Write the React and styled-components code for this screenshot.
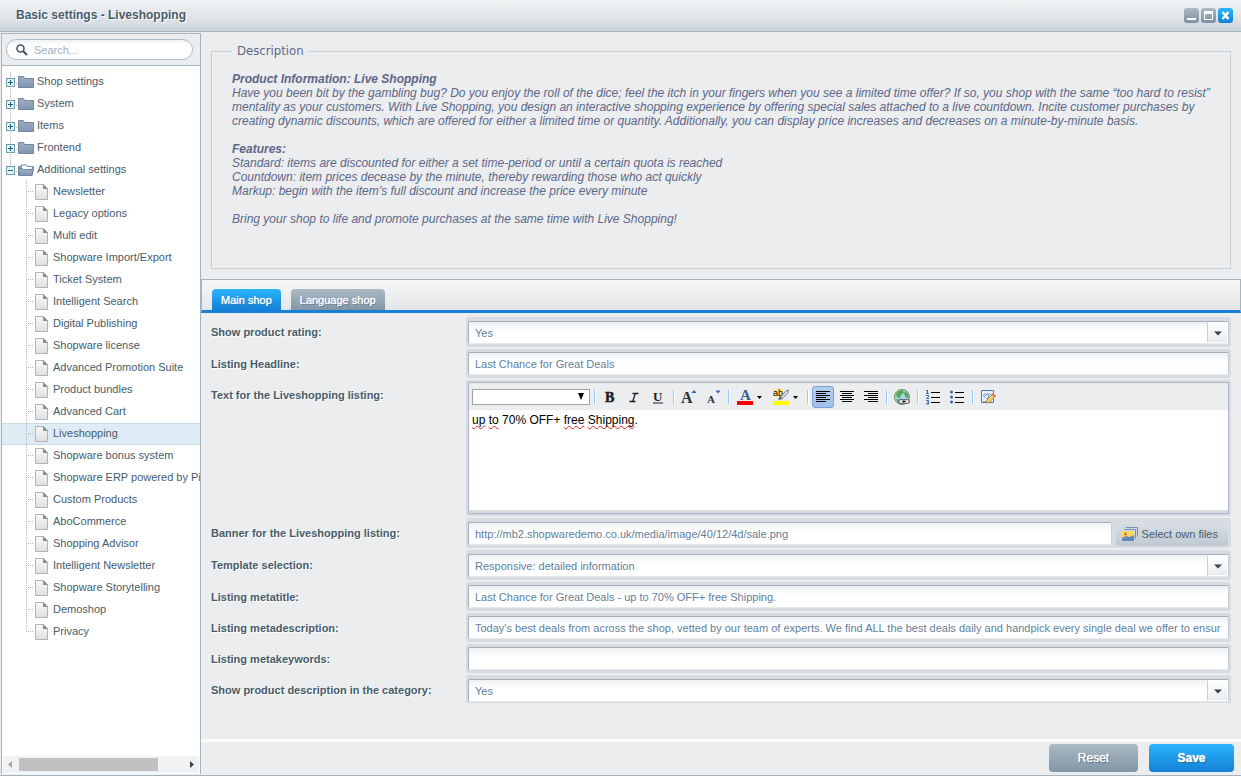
import React from 'react';
import styled, { createGlobalStyle, css } from 'styled-components';

const c = {
  bg: '#ebedef',
  line: '#a4b5c0',
  field: '#d6dce2',
  fieldLine: '#a3afb9',
  text: '#475c6a',
  input: '#62809b',
  blueTop: '#2ab4fc',
  blueBottom: '#1480d7',
  greyTop: '#abbac4',
  greyBottom: '#8296a6',
};

const Global = createGlobalStyle`
  * { box-sizing: border-box; }
  body {
    margin: 0;
    background: ${c.bg};
    color: ${c.text};
    font: 11px/14px "Liberation Sans", Arial, sans-serif;
  }
  button, input, select { font: inherit; color: inherit; }
`;

const Window = styled.div`
  display: flex;
  flex-direction: column;
  min-height: 100vh;
  padding-bottom: 1px;
  border-bottom: 1px solid ${c.line};
`;

const TitleBar = styled.header`
  display: flex;
  align-items: center;
  height: 32px;
  padding: 0 8px 1px 16px;
  background: linear-gradient(#f0f2f3, #e3e7ea 50%, #cbd3da);
  border-bottom: 1px solid ${c.line};
`;

const Title = styled.h1`
  flex: 1;
  margin: 0;
  font-size: 12px;
  line-height: 14px;
  text-shadow: 1px 1px 0 #fff;
`;

const Controls = styled.div`
  display: flex;
  gap: 2px;
`;

const ControlButton = styled.button`
  display: flex;
  width: 15px;
  height: 15px;
  padding: 0;
  border: 0;
  border-radius: 3px;
  background: ${(p) =>
    p.$primary
      ? `linear-gradient(${c.blueTop}, ${c.blueBottom})`
      : `linear-gradient(${c.greyTop}, #7c909f)`};
`;

const Body = styled.div`
  display: flex;
  flex: 1;
`;

const Sidebar = styled.aside`
  display: flex;
  flex-direction: column;
  flex: none;
  width: 200px;
  margin: 1px 0 0 1px;
  border: 1px solid ${c.line};
  border-bottom: 0;
  background: #fff;
`;

const SearchBar = styled.div`
  padding: 5px 7px 5px 4px;
  background: ${c.bg};
  border-bottom: 1px solid ${c.line};
`;

const SearchBox = styled.label`
  display: flex;
  align-items: center;
  gap: 6px;
  height: 21px;
  padding: 0 9px;
  border: 1px solid #abbecb;
  border-radius: 11px;
  background: linear-gradient(#eff1f3, #fff 5px);
`;

const SearchInput = styled.input`
  flex: 1;
  min-width: 0;
  padding: 0;
  border: 0;
  outline: 0;
  background: transparent;
  &::placeholder { color: #9db2bf; opacity: 1; }
`;

const Tree = styled.ul`
  flex: 1;
  margin: 0;
  padding: 5px 0 0;
  list-style: none;
  overflow: hidden;
`;

const TreeRow = styled.li`
  display: flex;
  align-items: center;
  height: 22px;
  padding-left: ${(p) => (p.$leaf ? 24 : 4)}px;
  border: solid transparent;
  border-width: 1px 0;
  white-space: nowrap;
  ${(p) =>
    p.$selected &&
    css`
      background: #deedf5;
      border-color: #c9dbe6;
    `}
`;

const TreeIcon = styled.svg`
  flex: none;
  margin: -1px 0;
`;

const TreeLabel = styled.a`
  padding-bottom: 2px;
  color: inherit;
  text-decoration: none;
`;

const ScrollTrack = styled.div`
  display: flex;
  align-items: center;
  height: 17px;
  margin: 0 1px 1px;
  background: #f1f2f3;
`;

const ScrollArrow = styled.svg`
  flex: none;
`;

const ScrollThumb = styled.div`
  width: 139px;
  height: 13px;
  margin-right: auto;
  background: #c1c1c1;
`;

const Main = styled.main`
  display: flex;
  flex-direction: column;
  flex: 1;
  min-width: 0;
`;

const Description = styled.fieldset`
  margin: 11px 10px 10px;
  padding: 13px 8px 42px 20px;
  border: 1px solid #c9ced3;
  color: #5d6788;
  font-size: 12px;
  font-style: italic;
  line-height: 14px;
`;

const Legend = styled.legend`
  padding: 0 5px;
  font: 13px/16px "DejaVu Sans Condensed", "DejaVu Sans", sans-serif;
  color: #5d6788;
`;

const Paragraph = styled.p`
  margin: 0 0 14px;
  &:last-child { margin: 0; }
`;

const TabBar = styled.div`
  display: flex;
  align-items: flex-end;
  gap: 10px;
  height: 34px;
  padding: 0 10px;
  border: 1px solid ${c.line};
  border-bottom: 3px solid ${c.blueBottom};
  background: linear-gradient(#f6f7f8, #e4e6e9);
`;

const Tab = styled.button`
  height: 21px;
  padding: 0 9px;
  border: 0;
  border-radius: 4px 4px 0 0;
  color: #fff;
  text-shadow: 0 0 1px #fff, 1px 1px 0 rgba(40, 70, 110, 0.5);
  background: ${(p) =>
    p.$active
      ? `linear-gradient(${c.blueTop}, ${c.blueBottom})`
      : `linear-gradient(${c.greyTop}, ${c.greyBottom})`};
`;

const Form = styled.form`
  display: grid;
  grid-template-columns: 255px minmax(0, 1fr);
  row-gap: 2px;
  align-items: start;
  padding: 4px 10px 0;
`;

const Label = styled.label`
  padding-top: 2px;
  font-weight: bold;
  line-height: 27px;
  text-shadow: 1px 1px 0 #fff;
`;

const Field = styled.div`
  display: flex;
  position: relative;
  padding: ${(p) => (p.$tall ? 4 : 3)}px 2px 3px;
  border-radius: 3px;
  background: ${c.field};
  ${(p) =>
    p.$clipped &&
    css`
      padding-bottom: 1px;
      border-radius: 3px 3px 0 0;
    `}
`;

const control = css`
  flex: 1;
  min-width: 0;
  height: 23px;
  padding: 0 6px;
  border: 1px solid ${c.fieldLine};
  border-right-color: #c6ced5;
  border-bottom-color: #e6eaed;
  border-radius: 2px;
  outline: 0;
  color: ${c.input};
  background: linear-gradient(#eff1f3, #fff 9px);
`;

const TextInput = styled.input`
  ${control}
`;

const Select = styled.select`
  ${control}
  appearance: none;
`;

const Trigger = styled.span`
  position: absolute;
  right: 3px;
  bottom: ${(p) => (p.$clipped ? 2 : 4)}px;
  display: flex;
  align-items: center;
  justify-content: center;
  width: 21px;
  height: 21px;
  padding-top: 2px;
  border: 1px solid #fff;
  border-left-color: #c6ced5;
  background: linear-gradient(#fff, #e9ecee);
  pointer-events: none;
`;

const FileButton = styled.button`
  display: flex;
  align-items: center;
  gap: 4px;
  height: 24px;
  margin: 0 1px -1px 4px;
  padding: 0 10px 0 6px;
  border: 0;
  border-radius: 3px;
  background: linear-gradient(#d9dfe5, #bdc9d2);
`;

const EditorField = styled.div`
  padding: 2px;
  border-radius: 3px;
  background: ${c.field};
`;

const Editor = styled.div`
  padding-bottom: 3px;
  border: 1px solid #b0b5cc;
  background: ${c.field};
`;

const Toolbar = styled.div`
  display: flex;
  align-items: center;
  height: 27px;
  padding-left: 3px;
  background: ${c.bg};
`;

const FontSelect = styled.span`
  display: flex;
  position: relative;
  align-items: center;
  margin-right: 1px;
`;

const FontDropdown = styled.select`
  appearance: none;
  width: 118px;
  height: 16px;
  padding: 0;
  border: 1px solid #a2a2a2;
  border-radius: 0;
  background: #fff;
`;

const FontArrow = styled.svg`
  position: absolute;
  right: 6px;
  pointer-events: none;
`;

const Separator = styled.span`
  width: 2px;
  height: 14px;
  margin: 0 2px 0 3px;
  border-left: 1px solid #98c8ff;
  background: #fff;
`;

const ToolButton = styled.button`
  display: flex;
  align-items: center;
  justify-content: center;
  width: ${(p) => (p.$wide ? 34 : 22)}px;
  height: 22px;
  margin: 0 1px;
  padding: 0;
  border: 1px solid transparent;
  border-radius: 3px;
  background: transparent;
  ${(p) =>
    p.$pressed &&
    css`
      border-color: #7e9fd0;
      background: linear-gradient(#b3cdef, #9dbfea);
    `}
`;

const Glyph = styled.svg`
  flex: none;
  overflow: visible;
  font-family: "Liberation Serif", serif;
  font-weight: bold;
`;

const EditorText = styled.div`
  height: 100px;
  padding: 3px;
  background: #fff;
  color: #000;
  font-size: 12px;
  outline: 0;
`;

const Misspelled = styled.span`
  text-decoration: underline wavy #e02020 1px;
  text-underline-offset: 1px;
  text-decoration-skip-ink: none;
`;

const Footer = styled.footer`
  display: flex;
  justify-content: flex-end;
  gap: 11px;
  margin-top: auto;
  padding: 2px 7px;
  border-top: 3px solid #f9fafa;
`;

const ActionButton = styled.button`
  min-width: ${(p) => (p.$primary ? 85 : 89)}px;
  height: 28px;
  border: 0;
  border-radius: 4px;
  color: #fff;
  font-size: 12px;
  font-weight: ${(p) => (p.$primary ? 'bold' : 'normal')};
  text-shadow: 0 0 1px #fff, 1px 1px 1px rgba(40, 60, 90, 0.6);
  background: ${(p) =>
    p.$primary
      ? `linear-gradient(${c.blueTop}, ${c.blueBottom})`
      : `linear-gradient(${c.greyTop}, ${c.greyBottom})`};
`;

const folders = [
  { name: 'Shop settings' },
  { name: 'System' },
  { name: 'Items' },
  { name: 'Frontend' },
  { name: 'Additional settings', open: true },
];

const pages = [
  'Newsletter', 'Legacy options', 'Multi edit', 'Shopware Import/Export', 'Ticket System',
  'Intelligent Search', 'Digital Publishing', 'Shopware license', 'Advanced Promotion Suite',
  'Product bundles', 'Advanced Cart', 'Liveshopping', 'Shopware bonus system',
  'Shopware ERP powered by Pickware', 'Custom Products', 'AboCommerce', 'Shopping Advisor',
  'Intelligent Newsletter', 'Shopware Storytelling', 'Demoshop', 'Privacy',
];

function FolderRow({ name, open }) {
  return (
    <TreeRow>
      <TreeIcon width="31" height="22" viewBox="0 0 31 22" aria-hidden="true">
        <defs>
          <linearGradient id="folder" x1="0" y1="0" x2="0" y2="1">
            <stop offset="0" stopColor="#9fb0c4" />
            <stop offset="1" stopColor="#7f95b0" />
          </linearGradient>
        </defs>
        <path d={open ? 'M4.5 1v6' : 'M4.5 1v21'} stroke="#b5b5b5" strokeDasharray="1 1" />
        <path d="M10 12.5h2" stroke="#b5b5b5" strokeDasharray="1 1" />
        <rect x="0.5" y="7.5" width="8" height="8" fill="#dff3f7" stroke="#6f9aa6" />
        <path d="M2 11.5h5" stroke="#1f6478" />
        {!open && <path d="M4.5 9v5" stroke="#1f6478" />}
        {open ? (
          <>
            <path d="M15.500 8.500v-2.500h5l1 1.500h5v2" fill="#fff" stroke="#7389a3" />
            <path d="M12.500 16.500v-9h2.500v3h10.500l2-3-1.500 9z" fill="url(#folder)" stroke="#7188a2" />
            <path d="M13.500 16.500l-1-7h4l1 1h10l-1.500 6z" fill="url(#folder)" stroke="#7188a2" />
          </>
        ) : (
          <path d="M12.500 16.500v-11h5l1 2h9v9z" fill="url(#folder)" stroke="#7188a2" />
        )}
      </TreeIcon>
      <TreeLabel href="#">{name}</TreeLabel>
    </TreeRow>
  );
}

function PageRow({ name, selected, last }) {
  return (
    <TreeRow $leaf $selected={selected}>
      <TreeIcon width="27" height="22" viewBox="0 0 27 22" aria-hidden="true">
        <defs>
          <linearGradient id="page" x1="0" y1="0" x2="0" y2="1">
            <stop offset="0" stopColor="#fafafa" />
            <stop offset="1" stopColor="#dedfe0" />
          </linearGradient>
        </defs>
        <path d={last ? 'M0.5 0v11' : 'M0.5 0v22'} stroke="#b5b5b5" strokeDasharray="1 1" />
        <path d="M2 10.500h6" stroke="#b5b5b5" strokeDasharray="1 1" />
        <path d="M9.500 3.500h8l4 4v11h-12z" fill="url(#page)" stroke="#b3b3b3" />
        <path d="M17 3l5 5h-5z" fill="#8e8e8e" />
      </TreeIcon>
      <TreeLabel href="#">{name}</TreeLabel>
    </TreeRow>
  );
}

function SelectField({ id, value, clipped }) {
  return (
    <Field $tall $clipped={clipped}>
      <Select id={id} defaultValue={value}>
        <option>{value}</option>
      </Select>
      <Trigger $clipped={clipped}>
        <svg width="8" height="5" viewBox="0 0 8 5"><path d="M0 0.500h8l-4 4z" fill="#33434f" /></svg>
      </Trigger>
    </Field>
  );
}

function TextField({ id, value }) {
  return (
    <Field>
      <TextInput id={id} defaultValue={value} />
    </Field>
  );
}

const lineSets = {
  left: [[0, 14], [0, 10], [0, 14], [0, 10], [0, 14], [0, 10]],
  center: [[0, 14], [2, 12], [0, 14], [2, 12], [0, 14], [2, 12]],
  right: [[0, 14], [4, 14], [0, 14], [4, 14], [0, 14], [4, 14]],
};

function AlignIcon({ side }) {
  return (
    <Glyph width="14" height="12" viewBox="0 0 14 12">
      {lineSets[side].map(([a, b], i) => (
        <path key={i} d={`M${a} ${i * 2 + 0.5}H${b}`} stroke="#000" />
      ))}
    </Glyph>
  );
}

function EditorToolbar() {
  return (
    <Toolbar role="toolbar" aria-label="Formatting">
      <FontSelect>
        <FontDropdown aria-label="Font" defaultValue="">
          <option value="" />
        </FontDropdown>
        <FontArrow width="6" height="7" viewBox="0 0 6 7"><path d="M0 0h6l-3 7z" fill="#000" /></FontArrow>
      </FontSelect>
      <Separator />
      <ToolButton type="button" aria-label="Bold">
        <Glyph width="16" height="16"><text x="3" y="13" fontSize="14" fill="#1b1f24" stroke="#1b1f24" strokeWidth="0.500">B</text></Glyph>
      </ToolButton>
      <ToolButton type="button" aria-label="Italic">
        <Glyph width="16" height="16"><path d="M6.500 4.500h6M3.500 12.500h6M9.500 4l-3 9" fill="none" stroke="#1b1f24" strokeWidth="1.300" /></Glyph>
      </ToolButton>
      <ToolButton type="button" aria-label="Underline">
        <Glyph width="16" height="16">
          <text x="3" y="12" fontSize="13" fill="#1b1f24">U</text>
          <path d="M3 14h10" stroke="#1b1f24" />
        </Glyph>
      </ToolButton>
      <Separator />
      <ToolButton type="button" aria-label="Grow text">
        <Glyph width="16" height="16">
          <text x="0" y="14" fontSize="16" fill="#2b3238">A</text>
          <path d="M10.500 4l2.500-3 2.500 3z" fill="#3560a8" />
        </Glyph>
      </ToolButton>
      <ToolButton type="button" aria-label="Shrink text">
        <Glyph width="16" height="16">
          <text x="2" y="14" fontSize="11" fill="#2b3238">A</text>
          <path d="M10.500 1.500l2.500 3 2.500-3z" fill="#3560a8" />
        </Glyph>
      </ToolButton>
      <Separator />
      <ToolButton type="button" $wide aria-label="Font color">
        <Glyph width="26" height="16">
          <text x="3" y="11" fontSize="15" fill="#3b5f95">A</text>
          <path d="M0 12h16v4H0z" fill="#f00" />
          <path d="M20 7h5l-2.500 3z" fill="#000" />
        </Glyph>
      </ToolButton>
      <ToolButton type="button" $wide aria-label="Highlight color">
        <Glyph width="26" height="16">
          <path d="M0 0h10v8H0z" fill="#ffe68a" />
          <text x="0" y="7" fontSize="9" fontFamily="Liberation Sans" fontWeight="normal" fill="#000">ab</text>
          <path d="M6 10l7-8 2.500-1-0.500 2.500-6 6.500z" fill="#e9ecf2" stroke="#667999" />
          <path d="M5 11l2-4 2 2z" fill="#4a4a4a" />
          <path d="M0 12h16v4H0z" fill="#ff0" />
          <path d="M20 7h5l-2.500 3z" fill="#000" />
        </Glyph>
      </ToolButton>
      <Separator />
      <ToolButton type="button" $pressed aria-label="Align left"><AlignIcon side="left" /></ToolButton>
      <ToolButton type="button" aria-label="Align center"><AlignIcon side="center" /></ToolButton>
      <ToolButton type="button" aria-label="Align right"><AlignIcon side="right" /></ToolButton>
      <Separator />
      <ToolButton type="button" aria-label="Link">
        <Glyph width="16" height="16">
          <circle cx="8" cy="8" r="7.500" fill="#a9d3ea" stroke="#5c9a5f" />
          <path d="M2 5l3-3.500 4 0 1 2.500-3 1.500-1 3.500-3-0.500zM11 2l3 3 1 4-3-0.500-2-3.500zM2 10l3 0.500 1 3.500-2 0z" fill="#56a84e" />
          <rect x="4.500" y="10.500" width="6" height="4" rx="2" fill="#ddd" stroke="#555" />
          <rect x="9.500" y="10.500" width="6" height="4" rx="2" fill="#ddd" stroke="#555" />
          <path d="M8 12.500h4" stroke="#333" />
        </Glyph>
      </ToolButton>
      <Separator />
      <ToolButton type="button" aria-label="Numbered list">
        <Glyph width="16" height="16">
          <g stroke="#3a66a0" fill="none">
            <path d="M2.500 1v3M1 1.500h1M1 4.500h3" />
            <path d="M1 6.500h2.500v1.500l-2 1.500h2.500" />
            <path d="M1 11.500h2.500v3.500h-2.500M2 13.500h1" />
          </g>
          <path d="M6 3.500h9M6 8.500h9M6 13.500h9" stroke="#000" />
        </Glyph>
      </ToolButton>
      <ToolButton type="button" aria-label="Bullet list">
        <Glyph width="16" height="16">
          <g fill="#3a66a0"><circle cx="2.500" cy="3" r="1.500" /><circle cx="2.500" cy="8" r="1.500" /><circle cx="2.500" cy="13" r="1.500" /></g>
          <path d="M6 3.500h9M6 8.500h9M6 13.500h9" stroke="#000" />
        </Glyph>
      </ToolButton>
      <Separator />
      <ToolButton type="button" aria-label="Edit source">
        <Glyph width="16" height="16">
          <path d="M1.500 1.500h12v12h-12z" fill="#e8f0fb" stroke="#4d77b5" />
          <path d="M3 12.500h8" stroke="#8ba8d0" />
          <path d="M5 4.500l-1.500 2 1.500 2M10 4.500l1.500 2M6 7c0-3 3-3 3 0s-3 2-2 3" fill="none" stroke="#4d77b5" />
          <path d="M6 14l1-3 6-6 2.500 2-6.500 6.500z" fill="#fbd36f" stroke="#b98632" />
          <path d="M12 5l3 2.500" stroke="#d8745c" strokeWidth="2" />
        </Glyph>
      </ToolButton>
    </Toolbar>
  );
}

export default function App() {
  return (
    <>
      <Global />
      <Window>
        <TitleBar>
          <Title>Basic settings - Liveshopping</Title>
          <Controls>
            <ControlButton aria-label="Minimize">
              <svg width="15" height="15"><path d="M3 10h9v2H3z" fill="#fff" /></svg>
            </ControlButton>
            <ControlButton aria-label="Maximize">
              <svg width="15" height="15"><path fillRule="evenodd" d="M3 3h9v9H3zM4 6v5h7V6z" fill="#fff" /></svg>
            </ControlButton>
            <ControlButton $primary aria-label="Close">
              <svg width="15" height="15"><path d="M4.500 4l6 7M10.500 4l-6 7" stroke="#fff" strokeWidth="2.500" /></svg>
            </ControlButton>
          </Controls>
        </TitleBar>
        <Body>
          <Sidebar>
            <SearchBar>
              <SearchBox>
                <svg width="12" height="12" viewBox="0 0 12 12" aria-hidden="true">
                  <circle cx="4.500" cy="4.500" r="3.500" fill="none" stroke="#44546a" strokeWidth="1.600" />
                  <path d="M7 7l4 4" stroke="#44546a" strokeWidth="2.200" />
                </svg>
                <SearchInput placeholder="Search..." aria-label="Search" />
              </SearchBox>
            </SearchBar>
            <Tree>
              {folders.map((f) => <FolderRow key={f.name} {...f} />)}
              {pages.map((name, i) => (
                <PageRow key={name} name={name} selected={name === 'Liveshopping'} last={i === pages.length - 1} />
              ))}
            </Tree>
            <ScrollTrack>
              <ScrollArrow width="16" height="17"><path d="M9 5v7l-4-3.500z" fill="#a3a3a3" /></ScrollArrow>
              <ScrollThumb />
              <ScrollArrow width="12" height="17"><path d="M3 5v7l4-3.500z" fill="#404040" /></ScrollArrow>
            </ScrollTrack>
          </Sidebar>
          <Main>
            <Description>
              <Legend>Description</Legend>
              <Paragraph>
                <b>Product Information: Live Shopping</b>
                <br />
                Have you been bit by the gambling bug? Do you enjoy the roll of the dice; feel the itch in your fingers
                when you see a limited time offer? If so, you shop with the same “too hard to resist” mentality as your
                customers. With Live Shopping, you design an interactive shopping experience by offering special sales
                attached to a live countdown. Incite customer purchases by creating dynamic discounts, which are offered
                for either a limited time or quantity. Additionally, you can display price increases and decreases on a
                minute-by-minute basis.
              </Paragraph>
              <Paragraph>
                <b>Features:</b>
                <br />
                Standard: items are discounted for either a set time-period or until a certain quota is reached
                <br />
                Countdown: item prices decease by the minute, thereby rewarding those who act quickly
                <br />
                Markup: begin with the item’s full discount and increase the price every minute
              </Paragraph>
              <Paragraph>Bring your shop to life and promote purchases at the same time with Live Shopping!</Paragraph>
            </Description>
            <TabBar role="tablist">
              <Tab role="tab" aria-selected="true" $active>Main shop</Tab>
              <Tab role="tab" aria-selected="false">Language shop</Tab>
            </TabBar>
            <Form id="settings">
              <Label htmlFor="rating">Show product rating:</Label>
              <SelectField id="rating" value="Yes" />
              <Label htmlFor="headline">Listing Headline:</Label>
              <TextField id="headline" value="Last Chance for Great Deals" />
              <Label as="span" id="listing-text">Text for the Liveshopping listing:</Label>
              <EditorField>
                <Editor>
                  <EditorToolbar />
                  <EditorText
                    role="textbox"
                    aria-labelledby="listing-text"
                    contentEditable
                    suppressContentEditableWarning
                    spellCheck={false}
                  >
                    <Misspelled>up</Misspelled> <Misspelled>to</Misspelled> 70% OFF+ <Misspelled>free</Misspelled>{' '}
                    <Misspelled>Shipping</Misspelled>.
                  </EditorText>
                </Editor>
              </EditorField>
              <Label htmlFor="banner">Banner for the Liveshopping listing:</Label>
              <Field $tall>
                <TextInput id="banner" defaultValue="http://mb2.shopwaredemo.co.uk/media/image/40/12/4d/sale.png" />
                <FileButton type="button">
                  <svg width="16" height="15" viewBox="0 0 16 15" aria-hidden="true">
                    <path d="M4 0.500h11.500v9M2 2.500h11.500v9" fill="none" stroke="#6f92bb" />
                    <path d="M0 4h12v10H0z" fill="#ffd766" />
                    <path d="M0 11l4-2 4 1 4-2v6H0z" fill="#6187bb" />
                    <circle cx="3.500" cy="7" r="1.500" fill="#e07a2a" />
                  </svg>
                  Select own files
                </FileButton>
              </Field>
              <Label htmlFor="template">Template selection:</Label>
              <SelectField id="template" value="Responsive: detailed information" />
              <Label htmlFor="metatitle">Listing metatitle:</Label>
              <TextField id="metatitle" value="Last Chance for Great Deals - up to 70% OFF+ free Shipping." />
              <Label htmlFor="metadescription">Listing metadescription:</Label>
              <TextField
                id="metadescription"
                value="Today's best deals from across the shop, vetted by our team of experts. We find ALL the best deals daily and handpick every single deal we offer to ensur"
              />
              <Label htmlFor="metakeywords">Listing metakeywords:</Label>
              <TextField id="metakeywords" value="" />
              <Label htmlFor="category">Show product description in the category:</Label>
              <SelectField id="category" value="Yes" clipped />
            </Form>
            <Footer>
              <ActionButton type="reset" form="settings">Reset</ActionButton>
              <ActionButton type="button" $primary>Save</ActionButton>
            </Footer>
          </Main>
        </Body>
      </Window>
    </>
  );
}
